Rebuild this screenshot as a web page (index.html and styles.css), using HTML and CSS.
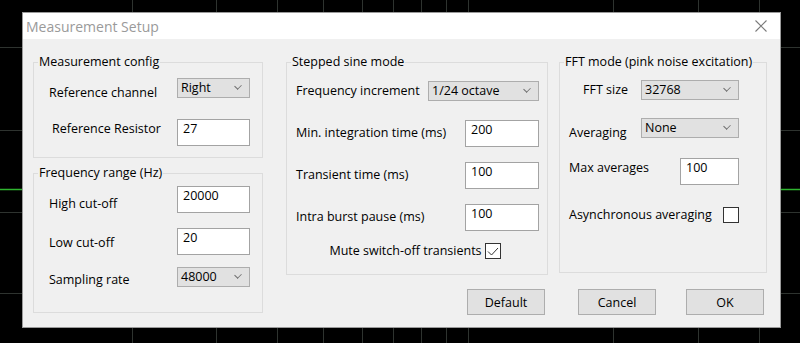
FILE: index.html
```html
<!DOCTYPE html>
<html lang="en">
<head>
    <meta charset="UTF-8">
    <title>Measurement Setup</title>
    <link rel="stylesheet" href="styles.css">
</head>
<body>
    <!-- plot behind the dialog -->
    <svg class="plot" width="800" height="343" viewBox="0 0 800 343">
        <g stroke="#2e332f" stroke-width="1">
            <line x1="132.5" y1="0" x2="132.5" y2="343"/>
            <line x1="216.5" y1="0" x2="216.5" y2="343"/>
            <line x1="277.5" y1="0" x2="277.5" y2="343"/>
            <line x1="323.5" y1="0" x2="323.5" y2="343"/>
            <line x1="362.5" y1="0" x2="362.5" y2="343"/>
            <line x1="393.5" y1="0" x2="393.5" y2="343"/>
            <line x1="421.5" y1="0" x2="421.5" y2="343"/>
            <line x1="446.5" y1="0" x2="446.5" y2="343"/>
            <line x1="468.5" y1="0" x2="468.5" y2="343"/>
            <line x1="613.5" y1="0" x2="613.5" y2="343"/>
            <line x1="698.5" y1="0" x2="698.5" y2="343"/>
            <line x1="759.5" y1="0" x2="759.5" y2="343"/>
            <line x1="0" y1="47.5" x2="800" y2="47.5"/>
            <line x1="0" y1="130.5" x2="800" y2="130.5"/>
            <line x1="0" y1="212.5" x2="800" y2="212.5"/>
            <line x1="0" y1="293.5" x2="800" y2="293.5"/>
        </g>
        <line x1="0" y1="189.5" x2="800" y2="189.5" stroke="#2fb52f" stroke-width="1.5"/>
    </svg>

    <div class="dialog">
        <div class="titlebar">
            <span class="title">Measurement Setup</span>
            <svg class="close" width="12" height="12" viewBox="0 0 12 12">
                <path d="M0.5 0.5 L11.5 11.5 M11.5 0.5 L0.5 11.5" stroke="#7a7a7a" stroke-width="1.1" fill="none"/>
            </svg>
        </div>

        <div class="dialog-body">
            <div class="col col-left">
                <fieldset class="group g-config">
                    <legend>Measurement config</legend>
                    <div class="row"><span class="lbl dn3">Reference channel</span><div class="combo w73">Right<i class="chev"></i></div></div>
                    <div class="row"><span class="lbl up nudge">Reference Resistor</span><input class="edit w73" type="text" value="27"></div>
                </fieldset>

                <fieldset class="group g-range">
                    <legend>Frequency range (Hz)</legend>
                    <div class="row"><span class="lbl dn3">High cut-off</span><input class="edit w73" type="text" value="20000"></div>
                    <div class="row sp6"><span class="lbl dn1">Low cut-off</span><input class="edit w73" type="text" value="20"></div>
                    <div class="row"><span class="lbl dn2">Sampling rate</span><div class="combo w73">48000<i class="chev"></i></div></div>
                </fieldset>
            </div>

            <div class="col col-mid">
                <fieldset class="group g-sine">
                    <legend>Stepped sine mode</legend>
                    <div class="row"><span class="lbl">Frequency increment</span><div class="combo w111">1/24 octave<i class="chev"></i></div></div>
                    <div class="row"><span class="lbl">Min. integration time (ms)</span><input class="edit w74" type="text" value="200"></div>
                    <div class="row"><span class="lbl">Transient time (ms)</span><input class="edit w74" type="text" value="100"></div>
                    <div class="row"><span class="lbl">Intra burst pause (ms)</span><input class="edit w74" type="text" value="100"></div>
                    <div class="row check-row">
                        <span class="lbl">Mute switch-off transients</span>
                        <span class="check">
                            <svg width="14" height="13" viewBox="0 0 14 13"><polyline points="2,6.5 5.5,10 12,3" fill="none" stroke="#333" stroke-width="1"/></svg>
                        </span>
                    </div>
                </fieldset>
                <div class="buttons">
                    <button>Default</button>
                </div>
            </div>

            <div class="col col-right">
                <fieldset class="group g-fft">
                    <legend>FFT mode (pink noise excitation)</legend>
                    <div class="row"><span class="lbl indent">FFT size</span><div class="combo w98">32768<i class="chev"></i></div></div>
                    <div class="row"><span class="lbl dn3">Averaging</span><div class="combo w98">None<i class="chev"></i></div></div>
                    <div class="row sp5"><span class="lbl up">Max averages</span><input class="edit w59" type="text" value="100"></div>
                    <div class="row sp6"><span class="lbl">Asynchronous averaging</span><span class="check"></span></div>
                </fieldset>
                <div class="buttons">
                    <button>Cancel</button>
                    <button>OK</button>
                </div>
            </div>
        </div>
    </div>
</body>
</html>
```

FILE: styles.css
```css
body {
    margin: 0;
    width: 800px;
    height: 343px;
    overflow: hidden;
    position: relative;
    background: #000;
    font-family: "Open Sans", "Noto Sans", sans-serif;
    font-size: 12.5px;
    color: #000;
}

.plot {
    position: absolute;
    left: 0;
    top: 0;
}

.dialog {
    position: absolute;
    left: 22px;
    top: 12px;
    width: 759px;
    height: 316px;
    box-sizing: border-box;
    border: 1px solid #9a9a9a;
    background: #f0f0f0;
    display: flex;
    flex-direction: column;
    overflow: hidden;
}

.titlebar {
    flex: none;
    height: 26px;
    background: #fff;
    display: flex;
    align-items: center;
    justify-content: space-between;
    padding: 0 13px 0 3px;
}

.title {
    font-size: 14px;
    color: #9a9a9a;
}

.dialog-body {
    display: flex;
    padding: 14px 0 0 10px;
}

.col {
    display: flex;
    flex-direction: column;
}

.col-left {
    width: 230px;
    margin-right: 23px;
}

.col-mid {
    width: 262px;
    margin-right: 11px;
}

.col-right {
    width: 208px;
}

/* group boxes */
.group {
    margin: 0;
    padding: 0 0 0 4px;
    border: 1px solid #dcdcdc;
    min-inline-size: 0;
    display: flex;
    flex-direction: column;
}

.group legend {
    padding: 0 1px;
    line-height: 18px;
    white-space: nowrap;
}

.g-config {
    padding-top: 1px;
    padding-bottom: 9px;
    padding-right: 12px;
    row-gap: 12px;
}

.g-config .row,
.g-range .row {
    padding-left: 11px;
}

.g-range {
    margin-top: 6px;
    padding-top: 1px;
    padding-bottom: 19px;
    padding-right: 12px;
    row-gap: 4px;
}

.g-sine {
    padding-top: 4px;
    padding-bottom: 13px;
    padding-right: 8px;
    row-gap: 10px;
}

.g-sine .row {
    padding-left: 5px;
}

.g-fft {
    padding-top: 3px;
    padding-bottom: 41px;
    padding-right: 27px;
    row-gap: 6px;
}

.g-fft .row {
    padding-left: 5px;
}

.row {
    height: 32px;
    display: flex;
    align-items: center;
}

.sp5 { margin-top: 5px; }
.sp6 { margin-top: 6px; }

.lbl {
    line-height: 18px;
    margin-right: auto;
    white-space: nowrap;
}

.lbl.indent { margin-left: 14px; }
.lbl.nudge { margin-left: 3px; }
.lbl.dn1 { padding-top: 3px; }
.lbl.dn2 { padding-top: 6px; }
.lbl.dn3 { padding-top: 9px; }
.lbl.up { padding-bottom: 6px; }

.g-sine .check-row {
    height: 20px;
    margin-top: -2px;
    justify-content: center;
    padding-left: 0;
}

.check-row .lbl {
    margin-right: 3px;
}

/* controls */
.combo {
    height: 20px;
    box-sizing: border-box;
    border: 1px solid #adadad;
    background: #e1e1e1;
    padding: 0 0 0 3px;
    line-height: 18px;
    display: flex;
    align-items: center;
    justify-content: space-between;
    flex: none;
}

.chev {
    width: 5px;
    height: 5px;
    border-right: 1px solid #6d6d6d;
    border-bottom: 1px solid #6d6d6d;
    transform: rotate(45deg) scaleX(0.8);
    margin: 0 8px 4px 0;
}

.edit {
    height: 27px;
    box-sizing: border-box;
    border: 1px solid #a3a3a3;
    background: #fff;
    padding: 0 5px 7px;
    margin: 0;
    font: inherit;
    line-height: 18px;
    color: #000;
    outline: none;
    flex: none;
}

.w59 { width: 59px; }
.w73 { width: 73px; }
.w74 { width: 74px; }
.w98 { width: 98px; }
.w111 { width: 111px; }

.check {
    width: 16px;
    height: 16px;
    box-sizing: border-box;
    border: 1px solid #333;
    background: #fff;
    display: flex;
    align-items: center;
    justify-content: center;
    flex: none;
}

.buttons {
    display: flex;
    justify-content: flex-end;
    gap: 30px;
    padding-right: 3px;
}

.col-mid .buttons { margin-top: 14px; }
.col-right .buttons { margin-top: 16px; }

button {
    width: 78px;
    height: 26px;
    border: 1px solid #adadad;
    background: #e1e1e1;
    font: inherit;
    color: #000;
    padding: 0;
}
```
